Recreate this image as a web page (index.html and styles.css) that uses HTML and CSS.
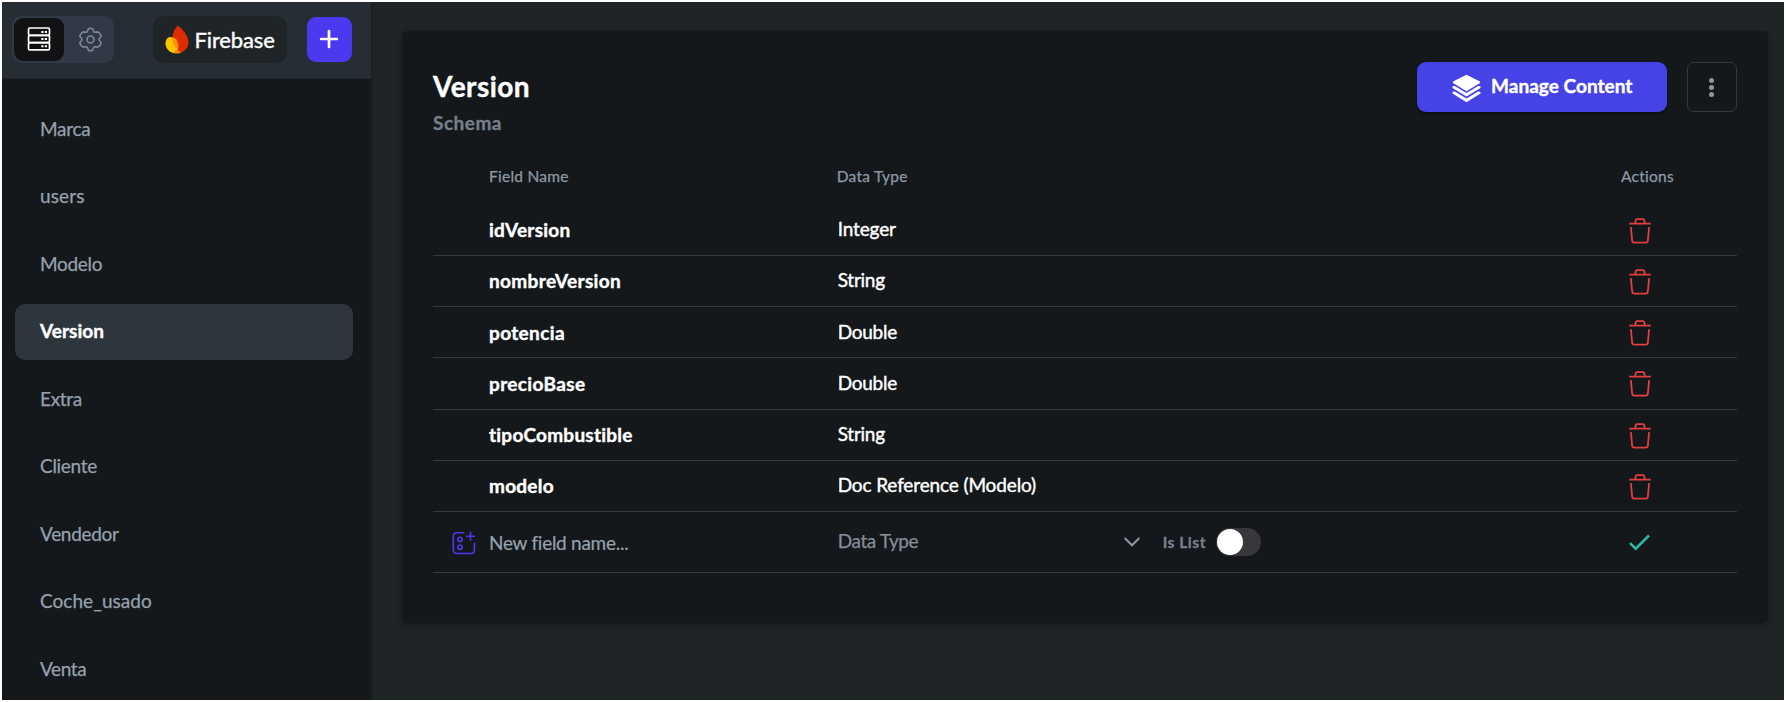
FILE: index.html
```html
<!DOCTYPE html>
<html lang="es">
<head>
<meta charset="utf-8">
<title>Version</title>
<link rel="stylesheet" href="styles.css">
</head>
<body>
<svg width="0" height="0" class="defs">
  <symbol id="trash" viewBox="0 0 24 26">
    <path d="M1.2 5.7h21.6M7.2 5.2l.5-2.9Q8 1.2 9 1.2h6q1 0 1.3 1.1l.5 2.9M2.9 9.2l1.2 13.2q.2 2.2 2.3 2.2h11.2q2.1 0 2.3-2.2l1.2-13.2"/>
  </symbol>
</svg>
<div class="app">
  <aside class="sidebar">
    <header class="topbar">
      <div class="switch">
        <span class="switch-tab switch-tab-on">
          <svg width="24" height="24" viewBox="0 0 24 24" fill="none" stroke="#fff" stroke-width="1.7">
            <rect x="1.5" y="1" width="21" height="7.3" rx="1.4"/>
            <rect x="1.5" y="8.3" width="21" height="7.3" rx="1.4"/>
            <rect x="1.5" y="15.6" width="21" height="7.3" rx="1.4"/>
            <path d="M14.3 4.9h2.2M17.8 4.9h2.2M14.3 12.1h2.2M17.8 12.1h2.2M14.3 19.2h2.2M17.8 19.2h2.2" stroke-width="2"/>
          </svg>
        </span>
        <span class="switch-tab switch-tab-off">
          <svg width="25" height="25" viewBox="0 0 24 24" fill="none" stroke="#7f8a95" stroke-width="1.5" stroke-linejoin="round">
            <circle cx="12" cy="12" r="3.3"/>
            <path d="M10 1.700Q12 .7 14 1.700L14.900 4Q15.200 5 16.200 5.100L19 4.700Q21.300 5.900 22.200 8.300Q22.300 9.500 20.700 10.800Q19.900 12 20.700 13.200Q22.300 14.500 22.200 15.700Q21.300 18.100 19 19.300L16.200 18.900Q15.200 19 14.900 20L14 22.300Q12 23.300 10 22.300L9.100 20Q8.800 19 7.800 18.900L5 19.300Q2.700 18.100 1.800 15.700Q1.700 14.500 3.300 13.200Q4.100 12 3.300 10.800Q1.700 9.500 1.800 8.300Q2.700 5.900 5 4.700L7.800 5.100Q8.800 5 9.100 4Z"/>
          </svg>
        </span>
      </div>
      <div class="firebase">
        <svg width="24" height="29" viewBox="0 0 24 29">
          <path d="M12.8.6C9.5 4.3 7.8 8 7.5 12L7.8 23l7 5.3c5-1.7 8.4-5.5 8.6-10.7C23.6 11 17.8 4.5 12.8.6Z" fill="#dd2c00"/>
          <path d="M4.5 12C1.6 12.8.4 16 .5 19c.3 4.6 3.9 8.3 8.5 9.3l4-4.3-1.5-9.5Q7.5 11.5 4.5 12Z" fill="#ffc400"/>
          <path d="M7.5 12c4.5 2.2 7 6.5 5.5 12l-4 4.300q3.800.6 7.200-.5C10.500 25 7.300 18 7.500 12Z" fill="#ff9100"/>
        </svg>
        <span>Firebase</span>
      </div>
      <div class="add">
        <svg width="20" height="20" viewBox="0 0 20 20" stroke="#fff" stroke-width="2.7" stroke-linecap="round"><path d="M10 2.1v15.800M2.100 10h15.800"/></svg>
      </div>
    </header>
    <nav class="nav">
      <a class="nav-item">Marca</a>
      <a class="nav-item loose">users</a>
      <a class="nav-item">Modelo</a>
      <a class="nav-item nav-item-on">Version</a>
      <a class="nav-item">Extra</a>
      <a class="nav-item">Cliente</a>
      <a class="nav-item">Vendedor</a>
      <a class="nav-item even">Coche_usado</a>
      <a class="nav-item tight">Venta</a>
    </nav>
  </aside>
  <main class="main">
    <section class="card">
      <div class="card-head">
        <div class="heading">
          <h1>Version</h1>
          <h2>Schema</h2>
        </div>
        <div class="manage">
          <svg width="29" height="29" viewBox="0 0 29 29" fill="#fff">
            <path d="M14.5.8 27.5 7.3q1.4.9 0 2L14.5 17.2 1.5 9.300q-1.400-1.100 0-2Z"/>
            <path d="M.5 12.3 2.8 11.9 14.5 19l11.700-7.100 2.300.4v1.700L14.500 22.400.5 14Z"/>
            <path d="M.5 17.9 2.8 17.5 14.5 24.500l11.700-7 2.300.4v1.700L14.500 28.300.5 19.600Z"/>
          </svg>
          <span>Manage Content</span>
        </div>
        <div class="more"><i></i><i></i><i></i></div>
      </div>
      <div class="table">
        <div class="row row-head"><span>Field Name</span><span>Data Type</span><span class="actions-label">Actions</span></div>
        <div class="row"><b class="near">idVersion</b><span>Integer</span><svg class="trash"><use href="#trash"/></svg></div>
        <div class="row"><b>nombreVersion</b><span class="snug">String</span><svg class="trash"><use href="#trash"/></svg></div>
        <div class="row"><b>potencia</b><span class="snug">Double</span><svg class="trash"><use href="#trash"/></svg></div>
        <div class="row"><b>precioBase</b><span class="snug">Double</span><svg class="trash"><use href="#trash"/></svg></div>
        <div class="row"><b class="near">tipoCombustible</b><span class="snug">String</span><svg class="trash"><use href="#trash"/></svg></div>
        <div class="row"><b class="near">modelo</b><span>Doc Reference (Modelo)</span><svg class="trash"><use href="#trash"/></svg></div>
        <div class="row row-new">
          <svg class="field-icon" viewBox="0 0 24 24" fill="none" stroke="#4b39ef" stroke-width="1.6">
            <path d="M12.3 1.7H5Q1.3 1.7 1.3 5.4v13.4q0 3.7 3.7 3.7h13.7q3.7 0 3.7-3.7v-7"/>
            <path d="M18.5.8v9M14 5.2h9"/>
            <circle cx="8" cy="8.4" r="2.2"/><circle cx="8" cy="16.2" r="2.2"/>
          </svg>
          <span class="placeholder">New field name...</span>
          <div class="type-cell">
            <span class="select">Data Type</span>
            <svg width="16" height="10" viewBox="0 0 16 10" fill="none" stroke="#8d99a5" stroke-width="2"><path d="M.7 1 8 8.3 15.3 1"/></svg>
            <span class="list-label">Is List</span>
            <span class="toggle"><i></i></span>
          </div>
          <svg class="check" viewBox="0 0 21 17" fill="none" stroke="#2bb9a5" stroke-width="2.5"><path d="M1 9.2l5.7 5.5L20 1.5"/></svg>
        </div>
      </div>
    </section>
  </main>
</div>
</body>
</html>
```
FILE: styles.css
```css
* { box-sizing: border-box; }

body {
  margin: 0;
  height: 702px;
  padding: 2px;
  background: #fff;
  font-family: Lato, "Liberation Sans", sans-serif;
  font-size: 19px;
  color: #fff;
  overflow: hidden;
}

.defs { position: absolute; }

.app {
  display: flex;
  height: 698px;
  background: #1f2427;
  overflow: hidden;
}

/* Sidebar */
.sidebar {
  flex: none;
  width: 369px;
  background: #14181b;
  box-shadow: 1px 0 3px rgba(0, 0, 0, .2);
}

.topbar {
  display: flex;
  align-items: center;
  height: 77px;
  padding: 0 19px 2px 10px;
  background: #262d34;
  border-bottom: 1px solid #1f2427;
}

.switch {
  display: flex;
  width: 102px;
  height: 47px;
  padding: 2px;
  border-radius: 10px;
  background: #323946;
}

.switch-tab {
  display: flex;
  flex: none;
  align-items: center;
  justify-content: center;
  width: 50px;
  border-radius: 9px;
}

.switch-tab-on { background: #111214; }
.switch-tab-off { padding-left: 3px; }

.firebase {
  display: flex;
  align-items: center;
  width: 134px;
  height: 47px;
  margin-left: 39px;
  padding-left: 12px;
  gap: 5.5px;
  border-radius: 10px;
  background: #1f2427;
  font-size: 22px;
  letter-spacing: -.14px;
  -webkit-text-stroke: .4px;
}

.firebase span { margin-top: 1px; }

.add {
  display: flex;
  align-items: center;
  justify-content: center;
  width: 45px;
  height: 45px;
  margin-left: 19.5px;
  padding-right: 1px;
  border-radius: 9px;
  background: #4b39ef;
}

.nav {
  display: grid;
  gap: 12.1px;
  padding: 23px 18px 0 13px;
}

.nav-item {
  display: flex;
  align-items: center;
  height: 55.4px;
  padding: 0 25px 3px;
  border-radius: 10px;
  color: #95a1ac;
  letter-spacing: -.3px;
  -webkit-text-stroke: .25px;
}

.nav-item-on {
  background: #2e363d;
  color: #fff;
  font-weight: 700;
  letter-spacing: .05px;
  -webkit-text-stroke: .4px;
}

.loose { letter-spacing: .15px; }
.even { letter-spacing: .04px; }
.tight { letter-spacing: -.4px; }

/* Schema card */
.main {
  flex: 1;
  padding: 29px 16px 0 31px;
}

.card {
  height: 592px;
  padding: 31px 31px 0;
  border-radius: 5px;
  background: #14181b;
  box-shadow: 0 3px 8px rgba(0, 0, 0, .3);
}

.card-head {
  display: flex;
  height: 88px;
}

.heading { flex: 1; }

h1, h2 { margin: 0; }

h1 {
  padding-top: 7px;
  font-size: 28px;
  line-height: 34px;
  letter-spacing: .45px;
  -webkit-text-stroke: .4px;
}

h2 {
  padding-top: 7px;
  font-size: 19px;
  line-height: 26px;
  letter-spacing: .5px;
  color: #75808b;
  -webkit-text-stroke: .3px;
}

.manage {
  display: flex;
  align-items: center;
  width: 250px;
  height: 50px;
  padding-left: 35px;
  gap: 10px;
  border-radius: 9px;
  background: #4542e6;
  box-shadow: 0 2px 3px rgba(0, 0, 0, .4);
  font-weight: 700;
  letter-spacing: .03px;
  -webkit-text-stroke: .4px;
}

.manage svg { margin-top: 3px; }
.manage span { margin-top: -3px; }

.more {
  display: flex;
  flex-direction: column;
  align-items: center;
  justify-content: center;
  gap: 2px;
  width: 50px;
  height: 50px;
  margin-left: 20px;
  padding-right: 1px;
  border: 1px solid #323946;
  border-radius: 7px;
}

.more i {
  width: 5px;
  height: 5px;
  border-radius: 50%;
  background: #8b97a2;
}

.row {
  display: grid;
  grid-template-columns: 56px 348.7px 1fr 109px;
  align-items: center;
  height: 51.25px;
  border-bottom: 1px solid #323946;
}

.row > :first-child { grid-column: 2; }

.row b {
  letter-spacing: .36px;
  -webkit-text-stroke: .4px;
}

.row .near { letter-spacing: .24px; }

.row > span {
  padding-bottom: 2.4px;
  letter-spacing: -.13px;
  -webkit-text-stroke: .4px;
}

.row > .snug { letter-spacing: -.25px; }

.trash {
  width: 24px;
  height: 26px;
  margin: 2px 0 0 -.5px;
  fill: none;
  stroke: #e03e41;
  stroke-width: 1.8;
}

.row-head {
  height: 54.6px;
  border: 0;
  font-size: 15.5px;
  color: #8e9aa5;
}

.row.row-head > span {
  padding-bottom: 3px;
  letter-spacing: .25px;
  -webkit-text-stroke: .25px;
}

.row-head > :nth-child(2) { margin-left: -1px; }
.row-head .actions-label { margin-left: -7px; }

.row-new { height: 61px; }

.row > .field-icon {
  grid-column: 1;
  width: 24px;
  height: 24px;
  margin: 1px 0 0 19px;
}

.row-new > .placeholder {
  padding: 0;
  color: #95a1ac;
  letter-spacing: -.27px;
  -webkit-text-stroke: .2px;
}

.type-cell {
  display: flex;
  align-items: center;
}

.select {
  width: 286px;
  padding-bottom: 3.5px;
  color: #828e99;
  letter-spacing: -.4px;
  -webkit-text-stroke: .25px;
}

.list-label {
  width: 53px;
  margin-left: 23px;
  font-size: 15.5px;
  font-weight: 700;
  letter-spacing: .54px;
  color: #75818c;
  -webkit-text-stroke: .3px;
}

.toggle {
  width: 45px;
  height: 28px;
  padding: 1px;
  border-radius: 14px;
  background: #37373c;
}

.toggle i {
  display: block;
  width: 26px;
  height: 26px;
  border-radius: 50%;
  background: #fff;
}

.check {
  width: 21px;
  height: 17px;
  margin: 1px 0 0 1px;
}
```
